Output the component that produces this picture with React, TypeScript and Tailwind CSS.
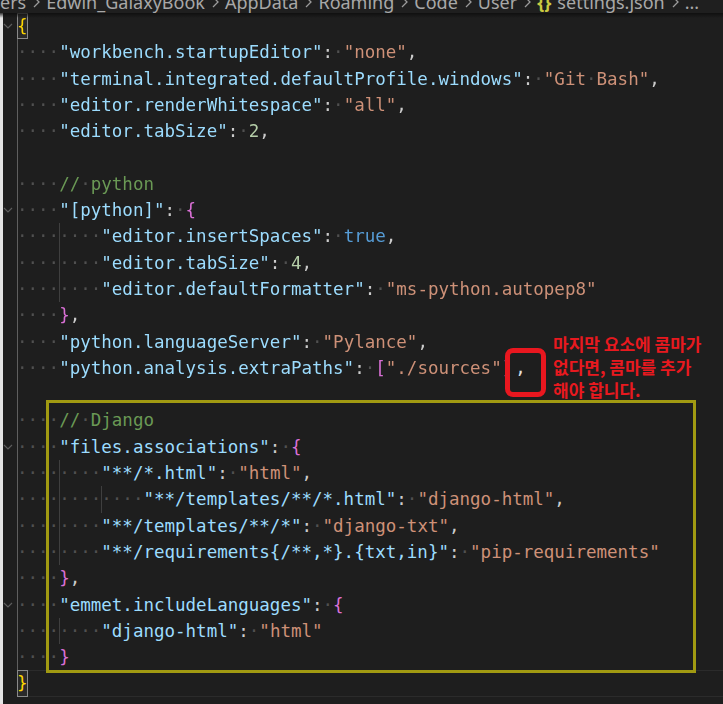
import React from "react";

type Tok = [string, string];

const K = "#9cdcfe";
const S = "#ce9178";
const P = "#cccccc";
const N = "#b5cea8";
const B = "#569cd6";
const C = "#6a9955";
const Y = "#ffd700";
const M = "#da70d6";
const WS = "#505050";

interface Line {
  guides: number;
  ws: number;
  toks: Tok[];
  fold?: boolean;
  blur?: boolean;
  match?: boolean;
  current?: boolean;
  tail?: Tok[];
}

const kv = (k: string, v: string, vc: string, comma = true): Tok[] => {
  const t: Tok[] = [
    [`"${k}"`, K],
    [":", P],
    [" ", WS],
    [v, vc],
  ];
  if (comma) t.push([",", P]);
  return t;
};

const lines: Line[] = [
  { guides: 0, ws: 0, toks: [["{", Y]], fold: true, blur: true, match: true },
  { guides: 1, ws: 4, toks: kv("workbench.startupEditor", '"none"', S), blur: true },
  { guides: 1, ws: 4, toks: kv("terminal.integrated.defaultProfile.windows", '"Git Bash"', S), blur: true },
  { guides: 1, ws: 4, toks: kv("editor.renderWhitespace", '"all"', S), blur: true },
  { guides: 1, ws: 4, toks: kv("editor.tabSize", "2", N), blur: true },
  { guides: 1, ws: 0, toks: [], blur: true },
  { guides: 1, ws: 4, toks: [["// python", C]], blur: true },
  {
    guides: 1,
    ws: 4,
    toks: [
      ['"[python]"', K],
      [":", P],
      [" ", WS],
      ["{", M],
    ],
    fold: true,
    blur: true,
  },
  { guides: 2, ws: 8, toks: kv("editor.insertSpaces", "true", B), blur: true },
  { guides: 2, ws: 8, toks: kv("editor.tabSize", "4", N), blur: true },
  { guides: 2, ws: 8, toks: kv("editor.defaultFormatter", '"ms-python.autopep8"', S, false), blur: true },
  {
    guides: 1,
    ws: 4,
    toks: [
      ["}", M],
      [",", P],
    ],
    blur: true,
  },
  { guides: 1, ws: 4, toks: kv("python.languageServer", '"Pylance"', S), blur: true },
  {
    guides: 1,
    ws: 4,
    toks: [
      ['"python.analysis.extraPaths"', K],
      [":", P],
      [" ", WS],
      ["[", M],
      ['"./sources"', S],
      ["]", M],
    ],
    blur: true,
    tail: [[",", "#e0e0e0"]],
  },
  { guides: 1, ws: 0, toks: [] },
  { guides: 1, ws: 4, toks: [["// Django", C]] },
  {
    guides: 1,
    ws: 4,
    toks: [
      ['"files.associations"', K],
      [":", P],
      [" ", WS],
      ["{", M],
    ],
    fold: true,
  },
  { guides: 2, ws: 8, toks: kv("**/*.html", '"html"', S) },
  { guides: 3, ws: 12, toks: kv("**/templates/**/*.html", '"django-html"', S) },
  { guides: 2, ws: 8, toks: kv("**/templates/**/*", '"django-txt"', S) },
  { guides: 2, ws: 8, toks: kv("**/requirements{/**,*}.{txt,in}", '"pip-requirements"', S, false) },
  {
    guides: 1,
    ws: 4,
    toks: [
      ["}", M],
      [",", P],
    ],
  },
  {
    guides: 1,
    ws: 4,
    toks: [
      ['"emmet.includeLanguages"', K],
      [":", P],
      [" ", WS],
      ["{", M],
    ],
    fold: true,
  },
  { guides: 2, ws: 8, toks: kv("django-html", '"html"', S, false) },
  { guides: 1, ws: 4, toks: [["}", M]] },
  { guides: 0, ws: 0, toks: [["}", Y]], match: true, current: true },
];

function renderTok(t: Tok, i: number) {
  const [text, color] = t;
  const parts = text.split(/( )/);
  return (
    <span key={i}>
      {parts.map((p, j) =>
        p === " " ? (
          <span key={j} className="text-[#505050]">
            ·
          </span>
        ) : p ? (
          <span key={j} style={{ color }}>
            {p}
          </span>
        ) : null
      )}
    </span>
  );
}

function Chevron() {
  return (
    <svg width="10" height="10" viewBox="0 0 10 10" className="block">
      <polyline points="1,3 5,7 9,3" fill="none" stroke="#5c5c5c" strokeWidth="1.2" />
    </svg>
  );
}

function CodeLine({ line }: { line: Line }) {
  const groups = [];
  const n = Math.max(line.guides, Math.ceil(line.ws / 4));
  for (let g = 0; g < n; g++) {
    const hasGuide = g < line.guides;
    const dots = Math.max(0, Math.min(4, line.ws - g * 4));
    groups.push(
      <span
        key={g}
        className={
          "flex items-center w-[4ch] shrink-0 text-[#505050] " +
          (hasGuide
            ? g === 0
              ? "shadow-[inset_1px_0_0_#5f5f5f]"
              : "shadow-[inset_1px_0_0_#3f3f3f]"
            : "")
        }
      >
        {"·".repeat(dots)}
      </span>
    );
  }
  return (
    <div className="flex h-[26.3px] items-stretch">
      <div className="w-[14px] shrink-0 flex items-center justify-start">
        {line.fold ? <Chevron /> : null}
      </div>
      <div
        className={
          "flex flex-1 items-stretch whitespace-pre " +
          (line.current ? "shadow-[inset_0_1px_0_#2b2b2b,inset_0_-1px_0_#2b2b2b]" : "")
        }
      >
        <div className={"flex items-stretch " + (line.blur ? "blur-[0.5px]" : "")}>
          {groups}
          {line.match ? (
            <span className="flex items-center w-[1ch] justify-center shadow-[inset_0_0_0_1px_#8a8a8a] bg-[#2a2a2a]">
              {line.toks.map(renderTok)}
            </span>
          ) : (
            <span className="flex items-center">{line.toks.map(renderTok)}</span>
          )}
        </div>
        {line.tail ? <span className="flex items-center pl-[3px]">{line.tail.map(renderTok)}</span> : null}
      </div>
    </div>
  );
}

function Sep() {
  return (
    <svg width="16" height="16" viewBox="0 0 16 16" className="mx-[2px] shrink-0">
      <polyline points="6,3 11,8 6,13" fill="none" stroke="#9a9a9a" strokeWidth="1.3" />
    </svg>
  );
}

export default function App() {
  const crumbs = ["Edwin_GalaxyBook", "AppData", "Roaming", "Code", "User"];
  return (
    <div className="relative w-[723px] h-[704px] bg-[#1e1e1e] overflow-hidden flex flex-col">
      {/* breadcrumb */}
      <div className="h-[13px] shrink-0 overflow-hidden bg-[#1f1f1f]">
        <div
          className="flex items-center whitespace-nowrap -mt-[7px] h-[18px] text-[18px] leading-[18px] text-[#a8a8a8]"
          style={{ fontFamily: '"Noto Sans", "Open Sans", sans-serif' }}
        >
          <span>ers</span>
          {crumbs.map((c) => (
            <React.Fragment key={c}>
              <Sep />
              <span>{c}</span>
            </React.Fragment>
          ))}
          <Sep />
          <span className="text-[#cbcb41] font-bold mr-[6px]">{"{}"}</span>
          <span>settings.json</span>
          <Sep />
          <span>...</span>
        </div>
      </div>
      <div className="absolute left-0 right-0 top-[13px] h-[5px] bg-gradient-to-b from-[#0c0c0c] to-transparent opacity-80 z-10" />

      {/* editor body */}
      <div className="flex flex-1">
        <div className="w-[3px] shrink-0 bg-[#e4e4e4]" />
        <div
          className="flex-1 flex flex-col text-[17.5px]"
          style={{ fontFamily: '"DejaVu Sans Mono", "Liberation Mono", monospace' }}
        >
          {lines.map((l, i) => (
            <CodeLine key={i} line={l} />
          ))}
        </div>
      </div>

      {/* annotations */}
      <div className="absolute left-[505px] top-[348px] w-[41px] h-[49px] border-[5px] border-[#e9171f] rounded-[8px]" />
      <div
        className="absolute left-[553px] top-[332px] text-[17px] leading-[23px] font-semibold text-[#e8191f] whitespace-nowrap"
        style={{ fontFamily: '"Noto Sans CJK KR", "Noto Sans", sans-serif' }}
      >
        <div>마지막 요소에 콤마가</div>
        <div>없다면, 콤마를 추가</div>
        <div>해야 합니다.</div>
      </div>
      <div className="absolute left-[46px] top-[400px] w-[650px] h-[273px] border-[3px] border-[#a19a12]" />
    </div>
  );
}
